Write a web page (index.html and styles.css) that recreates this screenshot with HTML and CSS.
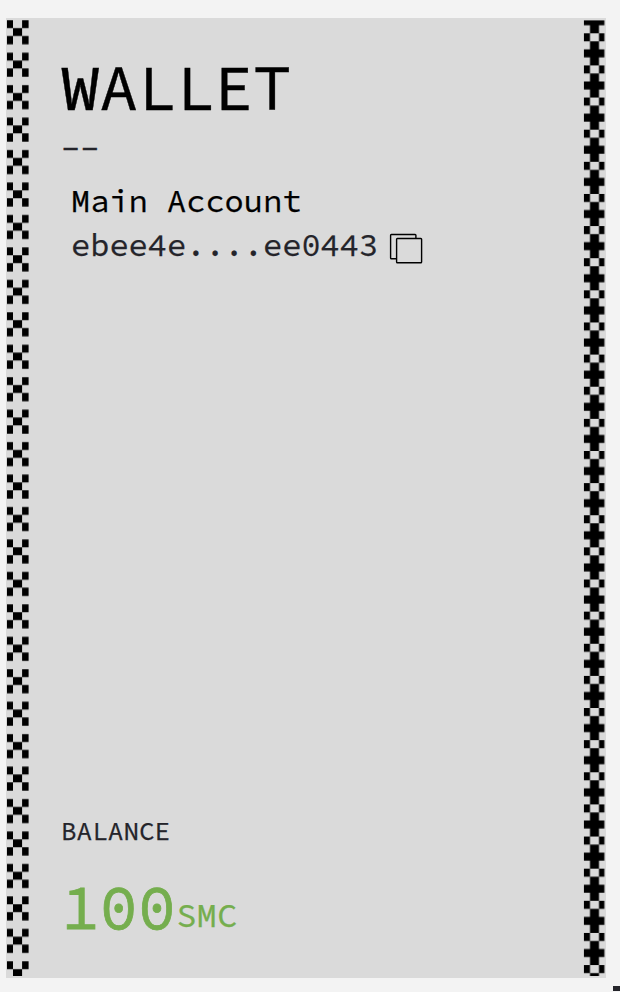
FILE: index.html
```
<!DOCTYPE html>
<html lang="en">
<head>
<meta charset="utf-8">
<title>Wallet</title>
<link rel="stylesheet" href="styles.css">
</head>
<body>
<main class="wallet">
  <svg class="border border-left" width="22" height="956" viewBox="0 0 22 956" aria-hidden="true">
    <defs>
      <pattern id="crosses" width="22" height="32.45" patternUnits="userSpaceOnUse">
        <path d="M0 0.2H6V8.1H15.1V0.2H21.6V8.1H15.1V16.1H21.6V24.3H15.1V16.1H6V24.3H0V16.1H6V8.1H0Z"/>
      </pattern>
    </defs>
    <rect width="22" height="956" fill="url(#crosses)"/>
  </svg>
  <section class="content">
    <h1 class="title">WALLET</h1>
    <div class="dashes">--</div>
    <div class="account">
      <div class="name">Main Account</div>
      <div class="address"><span>ebee4e....ee0443</span>
        <svg class="copy" width="34" height="32" viewBox="0 0 34 32" aria-hidden="true">
          <rect x="1.6" y="1.5" width="25.3" height="24.3" rx=".8"/>
          <rect class="front" x="7.6" y="5.5" width="25" height="24.3" rx=".8"/>
        </svg>
      </div>
    </div>
    <div class="label">BALANCE</div>
    <div class="balance"><span class="amount">100</span><span class="unit">SMC</span></div>
  </section>
  <svg class="border border-right" width="21" height="956" viewBox="0 0 21 956" aria-hidden="true">
    <defs>
      <pattern id="plusses" y="13.3" width="21" height="32.13" patternUnits="userSpaceOnUse">
        <path d="M0 0H6.3V8.1H0ZM15.3 0H20.8V8.1H15.3ZM6.3 8.1H15.3V16.1H20.8V24.2H15.3V32.13H6.3V24.2H0V16.1H6.3Z"/>
      </pattern>
    </defs>
    <rect y=".4" width="21" height="955.6" fill="url(#plusses)"/>
  </svg>
</main>
<div class="corner"></div>
</body>
</html>
```
FILE: styles.css
```
* { box-sizing: border-box; }
body { margin: 0; padding: 18px 14px 0 6px; height: 992px; overflow: hidden; background: #f3f3f3; color: #24242a; font-family: "Source Code Pro", "Noto Sans Mono CJK JP", "Liberation Mono", monospace; -webkit-text-stroke: .25px; }
.wallet { display: flex; width: 600px; height: 960px; padding: 2px 1px 0; background: #dadada; }
.border { display: block; flex: none; }
.border-right { transform: translateX(-.3px); }
.content { flex: 1; display: flex; flex-direction: column; padding-left: 32px; }
.title { margin: 27px 0 0; height: 80px; font-size: 64px; line-height: 80px; font-weight: 400; color: #000; -webkit-text-stroke: .4px; }
.dashes { height: 44px; font-size: 32px; line-height: 44px; -webkit-text-stroke: .4px; }
.account { margin-top: 8px; padding-left: 10px; font-size: 32px; }
.name { height: 44px; line-height: 44px; color: #000; }
.address { display: flex; align-items: center; height: 44px; line-height: 44px; }
.copy { margin: 7px 0 0 11px; fill: none; stroke: #000; stroke-width: 1.4; }
.copy .front { fill: #dadada; }
.label { margin-top: 546px; height: 36px; font-size: 26px; line-height: 36px; }
.balance { display: flex; align-items: baseline; margin-top: 17px; color: #75ae4e; line-height: 80px; }
.amount { font-size: 64px; -webkit-text-stroke: .8px; }
.unit { font-size: 34px; position: relative; top: -2px; }
.corner { position: absolute; left: 613px; top: 986px; width: 7px; height: 5px; background: #24242a; }
```
